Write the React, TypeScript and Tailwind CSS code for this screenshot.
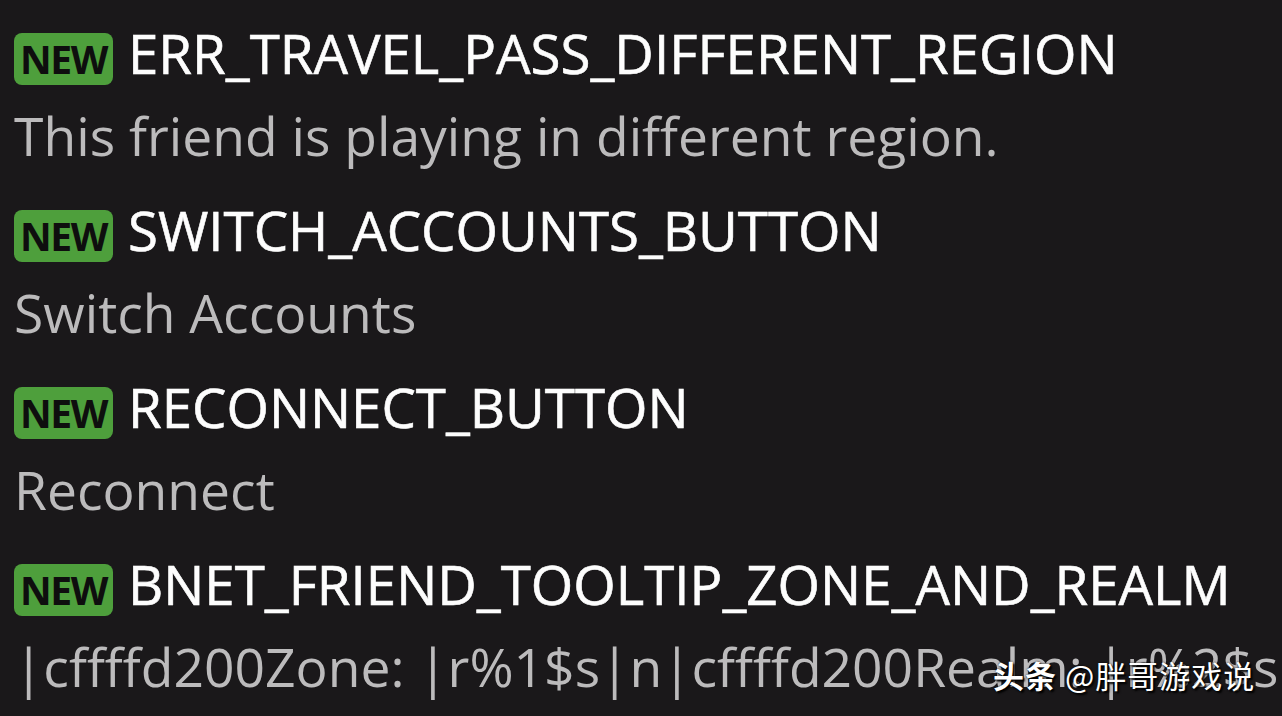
import React from "react";

const rows = [
  { key: "ERR_TRAVEL_PASS_DIFFERENT_REGION", desc: "This friend is playing in different region." },
  { key: "SWITCH_ACCOUNTS_BUTTON", desc: "Switch Accounts" },
  { key: "RECONNECT_BUTTON", desc: "Reconnect" },
  { key: "BNET_FRIEND_TOOLTIP_ZONE_AND_REALM", desc: "|cffffd200Zone: |r%1$s|n|cffffd200Realm: |r%2$s" },
];

export default function App() {
  return (
    <div
      className="relative w-[1282px] h-[716px] overflow-hidden bg-[#1a181a] pl-[14px] pt-[33px]"
      style={{ fontFamily: '"Open Sans", sans-serif' }}
    >
      <div className="flex flex-col">
        {rows.map((r) => (
          <div key={r.key} className="flex flex-col h-[177px]">
            <div className="flex items-center h-[52px]">
              <span className="flex items-center justify-center w-[99px] h-[52px] rounded-[8px] bg-[#4e9f3c] text-[#0e0e0e] text-[39px] font-bold tracking-[-1.5px] pt-[1px]">
                NEW
              </span>
              <span className="ml-[15px] mb-[12px] text-[#fdfdfd] text-[54.6px] font-medium leading-none whitespace-nowrap [-webkit-text-stroke:0.6px_#fdfdfd]">
                {r.key}
              </span>
            </div>
            <div className="mt-[24px] text-[#bcbbbc] text-[53.4px] leading-none whitespace-nowrap">
              {r.desc}
            </div>
          </div>
        ))}
      </div>
      <div
        className="absolute left-[993px] top-[652px] text-white text-[31px] tracking-[1px] whitespace-nowrap [text-shadow:2px_2px_2px_#000,0_0_2px_#000]"
        style={{ fontFamily: '"Noto Sans CJK SC", sans-serif' }}
      >
        <span className="font-bold">头条</span> @胖哥游戏说
      </div>
    </div>
  );
}
